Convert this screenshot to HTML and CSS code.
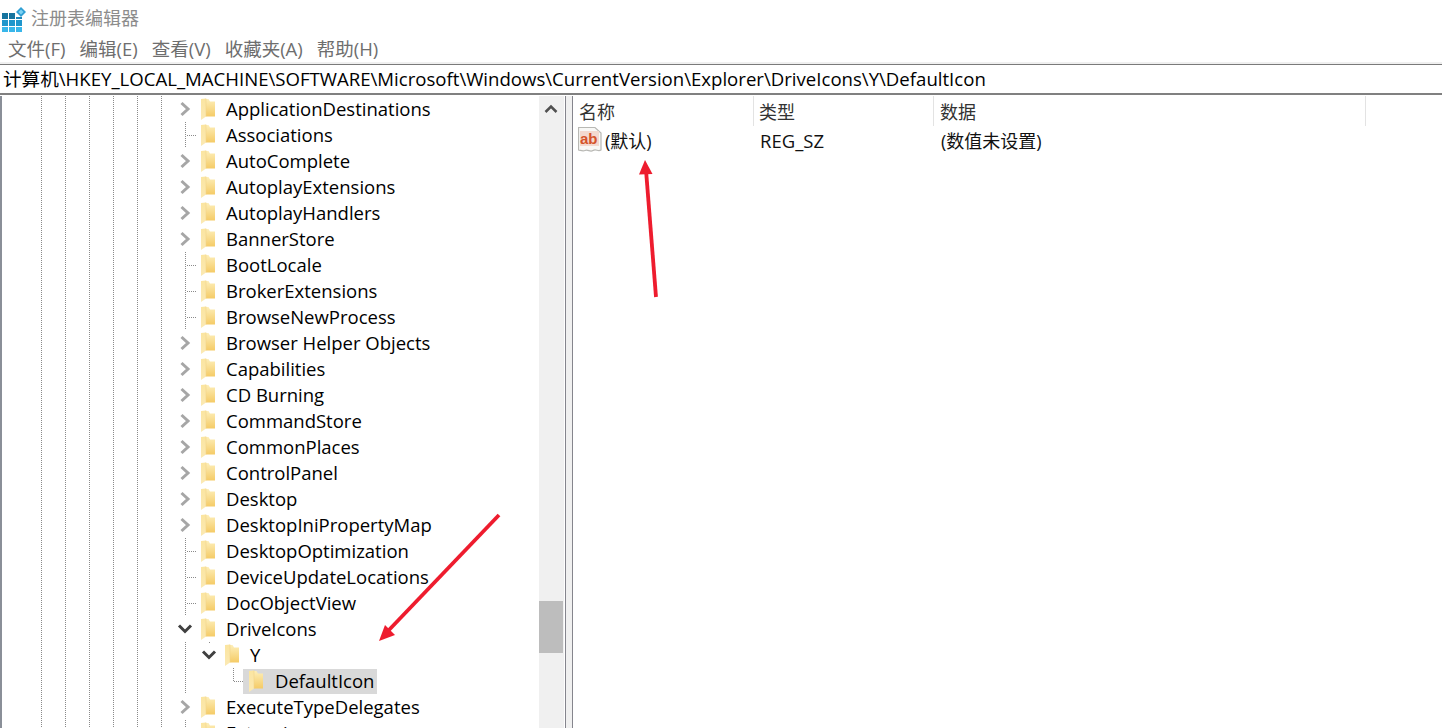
FILE: index.html
```html
<!DOCTYPE html>
<html lang="zh">
<head>
<meta charset="utf-8">
<title>注册表编辑器</title>
<link rel="stylesheet" href="styles.css">
</head>
<body>
<svg class="defs" width="0" height="0" aria-hidden="true">
  <defs>
    <linearGradient id="fold" x1="0" y1="0" x2="0" y2="1">
      <stop offset="0" stop-color="#fdeeb8"/><stop offset="1" stop-color="#f5cb66"/>
    </linearGradient>
    <linearGradient id="flap" x1="0" y1="0" x2="0" y2="1">
      <stop offset="0" stop-color="#fbe5a0"/><stop offset="1" stop-color="#fbe9b4"/>
    </linearGradient>
    <symbol id="folder" viewBox="0 0 16 22">
      <path d="M1 1H8.500L10 3.500H15V18.500H6V1Z" fill="url(#fold)"/>
      <path d="M1 1L6 .5V18.500L1 22Z" fill="url(#flap)"/>
      <path d="M6 .5V18.500" stroke="#f1d58a" stroke-width=".6"/>
    </symbol>
    <symbol id="right" viewBox="0 0 14 16"><path d="M3.500 2L10 8L3.500 14" fill="none" stroke="#a6a6a6" stroke-width="3"/></symbol>
    <symbol id="down" viewBox="0 0 16 14"><path d="M2 3.500L8 9.500L14 3.500" fill="none" stroke="#404040" stroke-width="3"/></symbol>
  </defs>
</svg>
<div class="app">
  <header class="title">
    <svg class="appicon" width="26" height="30" viewBox="0 0 26 30">
      <rect x="2" y="10" width="6" height="6" fill="#16749f"/><rect x="9" y="10" width="6" height="6" fill="#16749f"/><rect x="16" y="14" width="6" height="2" fill="#1c86b8"/>
      <rect x="2" y="17" width="6" height="6" fill="#1f96cc"/><rect x="9" y="17" width="6" height="6" fill="#1f96cc"/><rect x="16" y="17" width="6" height="6" fill="#1f96cc"/>
      <rect x="2" y="24" width="6" height="5" fill="#38b6ea"/><rect x="9" y="24" width="6" height="5" fill="#38b6ea"/><rect x="16" y="24" width="6" height="5" fill="#38b6ea"/>
      <path d="M21 4L26 9L21 14L16 9Z" fill="#2f9fd4"/><path d="M21 6.500L23.500 9L21 11.500L18.500 9Z" fill="#7fd2f2"/>
    </svg>
    <span class="title-text">注册表编辑器</span>
  </header>
  <nav class="menu">
    <span>文件(F)</span><span>编辑(E)</span><span>查看(V)</span><span>收藏夹(A)</span><span>帮助(H)</span>
  </nav>
  <div class="address">计算机\HKEY_LOCAL_MACHINE\SOFTWARE\Microsoft\Windows\CurrentVersion\Explorer\DriveIcons\Y\DefaultIcon</div>
  <main class="panes">
    <section class="tree">
      <div class="row"><i class="gutter"></i><i class="cell"><svg class="chev"><use href="#right"/></svg></i><svg class="fold"><use href="#folder"/></svg><span class="label">ApplicationDestinations</span></div>
      <div class="row"><i class="gutter"></i><i class="cell leaf"></i><svg class="fold"><use href="#folder"/></svg><span class="label">Associations</span></div>
      <div class="row"><i class="gutter"></i><i class="cell"><svg class="chev"><use href="#right"/></svg></i><svg class="fold"><use href="#folder"/></svg><span class="label">AutoComplete</span></div>
      <div class="row"><i class="gutter"></i><i class="cell"><svg class="chev"><use href="#right"/></svg></i><svg class="fold"><use href="#folder"/></svg><span class="label">AutoplayExtensions</span></div>
      <div class="row"><i class="gutter"></i><i class="cell"><svg class="chev"><use href="#right"/></svg></i><svg class="fold"><use href="#folder"/></svg><span class="label">AutoplayHandlers</span></div>
      <div class="row"><i class="gutter"></i><i class="cell"><svg class="chev"><use href="#right"/></svg></i><svg class="fold"><use href="#folder"/></svg><span class="label">BannerStore</span></div>
      <div class="row"><i class="gutter"></i><i class="cell leaf"></i><svg class="fold"><use href="#folder"/></svg><span class="label">BootLocale</span></div>
      <div class="row"><i class="gutter"></i><i class="cell leaf"></i><svg class="fold"><use href="#folder"/></svg><span class="label">BrokerExtensions</span></div>
      <div class="row"><i class="gutter"></i><i class="cell leaf"></i><svg class="fold"><use href="#folder"/></svg><span class="label">BrowseNewProcess</span></div>
      <div class="row"><i class="gutter"></i><i class="cell"><svg class="chev"><use href="#right"/></svg></i><svg class="fold"><use href="#folder"/></svg><span class="label">Browser Helper Objects</span></div>
      <div class="row"><i class="gutter"></i><i class="cell"><svg class="chev"><use href="#right"/></svg></i><svg class="fold"><use href="#folder"/></svg><span class="label">Capabilities</span></div>
      <div class="row"><i class="gutter"></i><i class="cell"><svg class="chev"><use href="#right"/></svg></i><svg class="fold"><use href="#folder"/></svg><span class="label">CD Burning</span></div>
      <div class="row"><i class="gutter"></i><i class="cell"><svg class="chev"><use href="#right"/></svg></i><svg class="fold"><use href="#folder"/></svg><span class="label">CommandStore</span></div>
      <div class="row"><i class="gutter"></i><i class="cell"><svg class="chev"><use href="#right"/></svg></i><svg class="fold"><use href="#folder"/></svg><span class="label">CommonPlaces</span></div>
      <div class="row"><i class="gutter"></i><i class="cell"><svg class="chev"><use href="#right"/></svg></i><svg class="fold"><use href="#folder"/></svg><span class="label">ControlPanel</span></div>
      <div class="row"><i class="gutter"></i><i class="cell"><svg class="chev"><use href="#right"/></svg></i><svg class="fold"><use href="#folder"/></svg><span class="label">Desktop</span></div>
      <div class="row"><i class="gutter"></i><i class="cell"><svg class="chev"><use href="#right"/></svg></i><svg class="fold"><use href="#folder"/></svg><span class="label">DesktopIniPropertyMap</span></div>
      <div class="row"><i class="gutter"></i><i class="cell leaf"></i><svg class="fold"><use href="#folder"/></svg><span class="label">DesktopOptimization</span></div>
      <div class="row"><i class="gutter"></i><i class="cell leaf"></i><svg class="fold"><use href="#folder"/></svg><span class="label">DeviceUpdateLocations</span></div>
      <div class="row"><i class="gutter"></i><i class="cell leaf"></i><svg class="fold"><use href="#folder"/></svg><span class="label">DocObjectView</span></div>
      <div class="row"><i class="gutter"></i><i class="cell"><svg class="chev open"><use href="#down"/></svg></i><svg class="fold"><use href="#folder"/></svg><span class="label">DriveIcons</span></div>
      <div class="row"><i class="gutter"></i><i class="cell pass"></i><i class="cell dot"><svg class="chev open"><use href="#down"/></svg></i><svg class="fold"><use href="#folder"/></svg><span class="label">Y</span></div>
      <div class="row"><i class="gutter"></i><i class="cell pass"></i><i class="cell"></i><i class="cell elbow"></i><span class="selected"><svg class="fold"><use href="#folder"/></svg><span class="label">DefaultIcon</span></span></div>
      <div class="row"><i class="gutter"></i><i class="cell"><svg class="chev"><use href="#right"/></svg></i><svg class="fold"><use href="#folder"/></svg><span class="label">ExecuteTypeDelegates</span></div>
      <div class="row"><i class="gutter"></i><i class="cell leaf"></i><svg class="fold"><use href="#folder"/></svg><span class="label">Extensions</span></div>
    </section>
    <aside class="scrollbar">
      <div class="scroll-up"><svg width="14" height="10" viewBox="0 0 14 10"><path d="M1.500 8L7 2.500L12.500 8" fill="none" stroke="#505050" stroke-width="2.500"/></svg></div>
      <div class="scroll-thumb"></div>
    </aside>
    <div class="splitter"></div>
    <section class="list">
      <div class="list-head">
        <span class="col col-name">名称</span><span class="col col-type">类型</span><span class="col col-data">数据</span>
      </div>
      <div class="list-row">
        <svg class="regicon" width="24" height="28" viewBox="0 0 24 28">
          <path d="M.5 1.500H17L23 7V24C20 26 18 22.500 15 24.500C12 26.500 10 23 7 24.500C5 25.500 3 24.500 .5 24Z" fill="#f8f8f6" stroke="#b8b8b4" stroke-width="1.200"/>
          <rect x="2" y="5" width="19" height="15" fill="#f3d9cf"/>
          <text x="2" y="18" class="regicon-text">ab</text>
        </svg>
        <span class="cell-name">(默认)</span><span class="cell-type">REG_SZ</span><span class="cell-data">(数值未设置)</span>
      </div>
    </section>
  </main>
  <svg class="arrows" width="1442" height="728" viewBox="0 0 1442 728" aria-hidden="true">
    <path d="M656 297L646 170" stroke="#ee1c2e" stroke-width="3.800" fill="none"/>
    <path d="M645 160L652.500 174L639 174.500Z" fill="#ee1c2e"/>
    <path d="M499 515L388 631" stroke="#ee1c2e" stroke-width="3.800" fill="none"/>
    <path d="M379 641L385 625L395 635Z" fill="#ee1c2e"/>
  </svg>
</div>
</body>
</html>
```
FILE: styles.css
```css
* { box-sizing: border-box; }
html, body { margin: 0; padding: 0; background: #fff; }
body { font-family: "Open Sans", "Noto Sans CJK SC", sans-serif; }
.defs { position: absolute; }
.app { position: relative; width: 1442px; height: 728px; overflow: hidden; display: flex; flex-direction: column; font-family: "Open Sans", "Noto Sans CJK SC", sans-serif; }

.title { height: 36px; display: flex; align-items: center; flex: none; }
.appicon { flex: none; }
.title-text { margin-left: 5px; font-size: 18px; color: #8c8c8c; line-height: 36px; }

.menu { height: 24px; margin-bottom: 2px; display: flex; gap: 14px; padding-left: 8px; align-items: center; font-size: 18.500px; color: #6e6e6e; flex: none; }
.menu span { white-space: nowrap; }

.address { height: 31px; flex: none; border-top: 1px solid #7a7a7a; border-bottom: 2px solid #808080; box-shadow: 0 -2px 0 #f0f0f0; margin-top: 2px; padding-left: 3px; font-size: 18.600px; line-height: 28px; color: #000; white-space: nowrap; overflow: hidden; }

.panes { flex: 1; min-height: 0; display: flex; margin-top: 1px; }

.tree { width: 539px; flex: none; border-left: 2px solid #8a8f98; overflow: hidden; }
.row { height: 26px; display: flex; align-items: center; font-size: 18.500px; color: #000; white-space: nowrap; }
.gutter { display: block; width: 132px; height: 26px; margin-left: 39px; flex: none; background: linear-gradient(#8a8a8a 50%, transparent 50%) 0 0 / 1px 2px repeat-y, linear-gradient(#8a8a8a 50%, transparent 50%) 24px 0 / 1px 2px repeat-y, linear-gradient(#8a8a8a 50%, transparent 50%) 48px 0 / 1px 2px repeat-y, linear-gradient(#8a8a8a 50%, transparent 50%) 72px 0 / 1px 2px repeat-y, linear-gradient(#8a8a8a 50%, transparent 50%) 96px 0 / 1px 2px repeat-y, linear-gradient(#8a8a8a 50%, transparent 50%) 120px 0 / 1px 2px repeat-y; }
.cell { display: flex; align-items: center; justify-content: center; width: 24px; height: 26px; flex: none; }
.pass { background: linear-gradient(#8a8a8a 50%, transparent 50%) 12px 0 / 1px 2px repeat-y; }
.leaf { background: linear-gradient(#8a8a8a 50%, transparent 50%) 12px 0 / 1px 2px repeat-y, repeating-linear-gradient(90deg, #8a8a8a 0 1px, transparent 1px 2px) 14px 13px / 10px 1px no-repeat; }
.dot { background: linear-gradient(#8a8a8a, #8a8a8a) 12px 0 / 1px 1px no-repeat; }
.elbow { background: repeating-linear-gradient(#8a8a8a 0 1px, transparent 1px 2px) 12px 0 / 1px 14px no-repeat, repeating-linear-gradient(90deg, #8a8a8a 0 1px, transparent 1px 2px) 13px 13px / 9px 1px no-repeat; }
.chev { width: 14px; height: 16px; }
.chev.open { width: 16px; height: 14px; }
.fold { width: 16px; height: 22px; margin-left: 3px; flex: none; }
.label { margin-left: 10px; line-height: 26px; }
.selected { display: flex; align-items: center; width: 134px; height: 25px; margin-left: -2px; background: #d9d9d9; padding-left: 2px; flex: none; }
.selected .label { margin-left: 11px; }

.scrollbar { width: 25px; flex: none; background: #f0f0f0; display: flex; flex-direction: column; }
.scroll-up { height: 26px; display: flex; align-items: center; justify-content: center; margin-right: 1px; }
.scroll-thumb { width: 24px; height: 52px; margin-top: 479px; background: #bdbdbd; }

.splitter { width: 8px; flex: none; background: #f0f0f0; border-left: 1px solid #85858d; border-right: 1px solid #85858d; margin-left: 1px; }

.list { flex: 1; min-width: 0; background: #fff; }
.list-head { height: 31px; display: flex; font-size: 18px; color: #333; line-height: 32px; }
.col { display: block; height: 30px; border-right: 1px solid #e3e3e3; padding-left: 6px; flex: none; white-space: nowrap; }
.col-name { width: 181px; }
.col-type { width: 180px; padding-left: 5px; }
.col-data { width: 432px; padding-left: 6px; }
.list-row { height: 28px; display: flex; align-items: center; font-size: 18px; color: #111; white-space: nowrap; margin-top: -1px; padding-left: 5px; }
.regicon { flex: none; }
.regicon-text { font-family: "Liberation Sans", sans-serif; font-weight: 700; font-size: 15px; fill: #d5532a; }
.cell-name { margin-left: 3px; width: 155px; flex: none; }
.cell-type { width: 181px; flex: none; font-size: 18.500px; }

.arrows { position: absolute; left: 0; top: 0; pointer-events: none; }
```
